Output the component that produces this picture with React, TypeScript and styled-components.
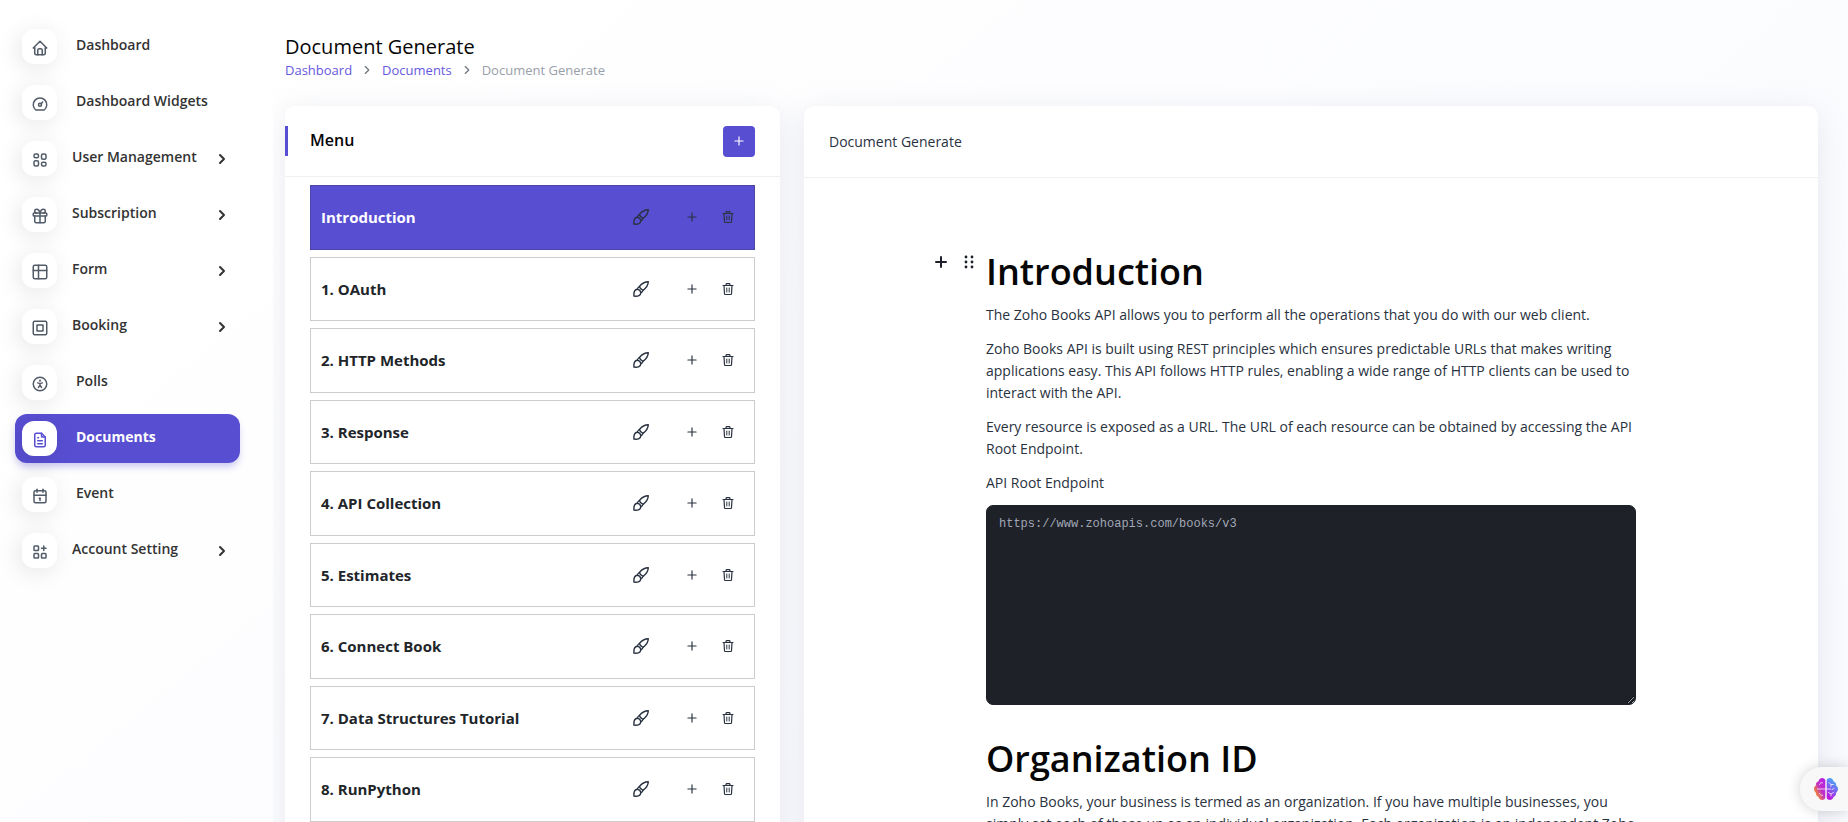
import React from "react";
import styled, { createGlobalStyle, css } from "styled-components";
import {
  TbHome,
  TbDashboard,
  TbLayout2,
  TbGift,
  TbTable,
  TbAccessible,
  TbFileText,
  TbCalendar,
  TbApps,
  TbChevronRight,
  TbPlus,
} from "react-icons/tb";

const primary = "#584ed2";

const GlobalStyle = createGlobalStyle`
  *, *::before, *::after { box-sizing: border-box; }
  body {
    margin: 0;
    font-family: "Open Sans", sans-serif;
    font-size: 14px;
    line-height: 1.5;
    color: #293240;
    background: linear-gradient(141deg, #ffffff 10%, #f9fafe 100%) fixed;
  }
  button { font: inherit; color: inherit; }
  h1, h2, h3, h4, p, ul, ol { margin: 0; padding: 0; }
  ul, ol { list-style: none; }
  a { text-decoration: none; }
`;

const Shell = styled.div`
  display: flex;
  height: 100vh;
  overflow: hidden;
`;

const Sidebar = styled.nav`
  flex: 0 0 273px;
  padding: 22px 33px 22px 15px;
`;

const NavList = styled.ul`
  display: flex;
  flex-direction: column;
  gap: 7px;
`;

const NavLink = styled.a<{ $active?: boolean }>`
  display: flex;
  align-items: center;
  height: 49px;
  padding: 7px 10px 7px 7px;
  border-radius: 12px;
  color: #333333;
  font-weight: 600;
  ${(p) =>
    p.$active &&
    css`
      background: ${primary};
      color: #ffffff;
      font-weight: 700;
      box-shadow: 0 5px 7px -1px rgba(88, 78, 210, 0.3);
    `}
`;

const NavIcon = styled.span<{ $active?: boolean }>`
  display: flex;
  align-items: center;
  justify-content: center;
  width: 35px;
  height: 35px;
  padding-top: 3px;
  border-radius: 12px;
  background: #ffffff;
  color: ${(p) => (p.$active ? primary : "#525b69")};
  font-size: 18px;
  box-shadow: -3px 4px 23px rgba(0, 0, 0, 0.1);
`;

const NavLabel = styled.span<{ $group?: boolean }>`
  flex: 1;
  padding-bottom: 4px;
  margin-left: ${(p) => (p.$group ? "15px" : "19px")};
`;

const Main = styled.main`
  flex: 1;
  min-width: 0;
  padding: 32px 18px 24px 0;
  overflow-y: auto;
  scrollbar-width: none;
`;

const PageHeader = styled.header`
  padding: 0 12px;
  margin-bottom: 27px;
`;

const PageTitle = styled.h1`
  font-size: 20px;
  font-weight: 500;
  line-height: 29px;
  color: #060606;
`;

const Crumbs = styled.ol`
  display: flex;
  align-items: center;
  font-size: 13px;
  line-height: 18px;
  color: #99a0a8;
  a { color: #6759dd; }
  svg { margin: 0 8px; color: #6c757d; display: block; }
`;

const Crumb = styled.li`
  display: flex;
  align-items: center;
`;

const Columns = styled.div`
  display: grid;
  grid-template-columns: minmax(0, 1fr) minmax(0, 2fr);
`;

const Column = styled.section`
  padding: 0 12px;
`;

const Card = styled.div`
  min-height: 100%;
  background: #ffffff;
  border-radius: 10px;
  box-shadow: 0 6px 30px rgba(182, 186, 203, 0.3);
`;

const MenuHeader = styled.header`
  display: flex;
  align-items: center;
  justify-content: space-between;
  height: 71px;
  padding-right: 25px;
  border-bottom: 1px solid #f1f1f1;
`;

const MenuTitle = styled.h2`
  height: 30px;
  padding-left: 22px;
  border-left: 3px solid ${primary};
  font-size: 16px;
  font-weight: 600;
  line-height: 28px;
  color: #060606;
`;

const AddButton = styled.button`
  display: flex;
  align-items: center;
  justify-content: center;
  width: 32px;
  height: 31px;
  padding: 0;
  border: 0;
  border-radius: 4px;
  background: ${primary};
  color: #ffffff;
  cursor: pointer;
`;

const MenuList = styled.ul`
  display: flex;
  flex-direction: column;
  gap: 7px;
  padding: 8px 25px 25px;
`;

const MenuRow = styled.li<{ $active?: boolean }>`
  display: flex;
  align-items: center;
  padding: 20px 20px 20px 10px;
  border: 1px solid ${(p) => (p.$active ? "#4d46a6" : "#cccccc")};
  background: ${(p) => (p.$active ? primary : "#ffffff")};
  font-size: 15px;
  font-weight: 700;
  color: #212529;
  a { flex: 1; color: ${(p) => (p.$active ? "#ffffff" : "inherit")}; }
`;

const RowButton = styled.button<{ $gap?: number }>`
  display: flex;
  padding: 0;
  margin-left: ${(p) => p.$gap ?? 0}px;
  border: 0;
  background: none;
  color: #293240;
  cursor: pointer;
`;

const DocHeader = styled.header`
  height: 72px;
  padding: 25px;
  border-bottom: 1px solid #f1f1f1;
`;

const DocTitle = styled.h2`
  font-size: 14px;
  font-weight: 400;
  line-height: 21px;
`;

const Editor = styled.article`
  position: relative;
  width: 100%;
  max-width: 650px;
  margin: 0 auto;
  padding: 61px 0 40px;
`;

const BlockTools = styled.div`
  position: absolute;
  top: 71px;
  right: 100%;
  display: flex;
  gap: 2px;
  padding-right: 4px;
`;

const ToolButton = styled.button`
  display: flex;
  align-items: center;
  justify-content: center;
  width: 26px;
  height: 26px;
  padding: 0;
  border: 0;
  background: none;
  color: #1d202b;
  cursor: pointer;
`;

const BlockHeading = styled.h3`
  padding: 10px 0 3px;
  font-size: 36px;
  font-weight: 600;
  line-height: 46px;
  color: #060606;
`;

const Paragraph = styled.p`
  padding: 6px 0;
  line-height: 22px;
`;

const CodeBlock = styled.textarea`
  display: block;
  width: 100%;
  height: 200px;
  margin: 5px 0 21px;
  padding: 9px 12px;
  border: 1px solid #1e2128;
  border-radius: 7px;
  outline: 0;
  resize: vertical;
  background: #1e2128;
  color: #a1a7b6;
  font-family: "Liberation Mono", monospace;
  font-size: 12px;
  line-height: 19px;
`;

const AssistantButton = styled.button`
  position: fixed;
  right: 0;
  bottom: 11px;
  display: flex;
  align-items: center;
  width: 48px;
  height: 44px;
  padding: 0 0 0 14px;
  border: 0;
  border-radius: 22px 0 0 22px;
  background: #f8f8f8;
  box-shadow: 0 0 14px rgba(0, 0, 0, 0.18);
  cursor: pointer;
`;

const FrameIcon = () => (
  <svg width="18" height="18" viewBox="0 0 24 24" fill="none" stroke="currentColor" strokeWidth="2" strokeLinejoin="round">
    <rect x="3" y="3" width="18" height="18" rx="2" />
    <rect x="8" y="8" width="8" height="8" />
  </svg>
);

const BrushIcon = () => (
  <svg width="16" height="16" viewBox="0 0 16 16" fill="none" stroke="currentColor" strokeWidth="1.4" strokeLinejoin="round">
    <path d="M15.3 0.8C11.900 0.900 8.800 2.600 6.400 5.500C7 7.500 8 8.700 10 9.400C13.200 7 15.200 4 15.300 0.800Z" />
    <path d="M6.400 5.500C5.200 6.200 4.500 7.100 4.300 8.200C6.200 8.400 7.500 9.700 7.800 11.700C9 11.400 9.700 10.600 10 9.400" />
    <path d="M4.300 8.200C1.600 8.600 0.500 10.800 1 15.100C5.400 15.500 7.700 14.400 7.800 11.700" />
  </svg>
);

const TrashIcon = () => (
  <svg width="12" height="14" viewBox="0 0 12 14" fill="none" stroke="currentColor" strokeWidth="1.2" strokeLinecap="round" strokeLinejoin="round">
    <path d="M1 3.500h10M3.800 3.500L4.300 1.700h3.400L8.200 3.500M2 3.500l0.500 8.200c0 0.500 0.400 0.800 0.900 0.800h5.200c0.500 0 0.900-0.300 0.900-0.800L10 3.500" />
    <path strokeWidth="1" d="M4.800 6v4M7.200 6v4" />
  </svg>
);

const BrainIcon = () => (
  <svg width="24" height="24" viewBox="0 0 24 24" fill="none">
    <defs>
      <linearGradient id="brainLeft" x1="0" y1="1" x2="1" y2="0">
        <stop offset="0.2" stopColor="#f58a2c" />
        <stop offset="0.55" stopColor="#c02fc8" />
        <stop offset="1" stopColor="#b41fe4" />
      </linearGradient>
      <linearGradient id="brainRight" x1="0.3" y1="1" x2="0.7" y2="0">
        <stop offset="0.1" stopColor="#b81ddf" />
        <stop offset="0.5" stopColor="#7b62f0" />
        <stop offset="0.9" stopColor="#4aa8f5" />
      </linearGradient>
    </defs>
    <path fill="url(#brainLeft)" d="M11.3 3C10.8 1.700 9.600 1 8.200 1 6.200 1 4.800 2.400 4.500 4.200 2.700 4.800 1.600 6.500 1.900 8.400.6 9.200 0 10.500 0 12c0 1.500.7 2.900 1.900 3.700-.2 1.900.8 3.500 2.500 4.100C4.800 21.700 6.200 23 8.200 23c1.400 0 2.600-.7 3.100-2z" />
    <path fill="url(#brainRight)" d="M12.700 3c.5-1.300 1.700-2 3.100-2 2 0 3.400 1.400 3.700 3.200 1.800.6 2.900 2.300 2.600 4.200 1.300.8 1.900 2.100 1.900 3.600 0 1.500-.7 2.900-1.900 3.700.2 1.900-.8 3.500-2.500 4.100-.4 1.900-1.800 3.200-3.800 3.200-1.400 0-2.600-.7-3.100-2z" />
    <g stroke="#ffffff" strokeOpacity="0.75" strokeWidth="1" strokeLinecap="round">
      <path d="M3.500 12h8M5.500 7.500c.3-1.300 1.500-2 3-1.800M5.500 16.500c.3 1.300 1.500 2 3 1.800M12.700 12h4M15 5.500l2 2v2M17 7.500h2.500M14.500 15.500l2.500 1.500 2.500-1.500M17 17v2M18 12.500l2-1" />
    </g>
  </svg>
);

const DragIcon = () => (
  <svg width="10" height="14" viewBox="0 0 10 14" fill="currentColor">
    {[2, 7, 12].map((y) => (
      <React.Fragment key={y}>
        <circle cx="2" cy={y} r="1.4" />
        <circle cx="8" cy={y} r="1.4" />
      </React.Fragment>
    ))}
  </svg>
);

const navItems: { label: string; icon: React.ReactNode; group?: boolean; active?: boolean }[] = [
  { label: "Dashboard", icon: <TbHome /> },
  { label: "Dashboard Widgets", icon: <TbDashboard /> },
  { label: "User Management", icon: <TbLayout2 />, group: true },
  { label: "Subscription", icon: <TbGift />, group: true },
  { label: "Form", icon: <TbTable />, group: true },
  { label: "Booking", icon: <FrameIcon />, group: true },
  { label: "Polls", icon: <TbAccessible /> },
  { label: "Documents", icon: <TbFileText />, active: true },
  { label: "Event", icon: <TbCalendar /> },
  { label: "Account Setting", icon: <TbApps />, group: true },
];

const menuItems = [
  "Introduction",
  "1. OAuth",
  "2. HTTP Methods",
  "3. Response",
  "4. API Collection",
  "5. Estimates",
  "6. Connect Book",
  "7. Data Structures Tutorial",
  "8. RunPython",
];

export default function App() {
  return (
    <>
      <GlobalStyle />
      <Shell>
        <Sidebar>
          <NavList>
            {navItems.map((item) => (
              <li key={item.label}>
                <NavLink href="#" $active={item.active}>
                  <NavIcon $active={item.active}>{item.icon}</NavIcon>
                  <NavLabel $group={item.group}>{item.label}</NavLabel>
                  {item.group && <TbChevronRight size={16} strokeWidth={3} />}
                </NavLink>
              </li>
            ))}
          </NavList>
        </Sidebar>

        <Main>
          <PageHeader>
            <PageTitle>Document Generate</PageTitle>
            <Crumbs>
              <Crumb><a href="#">Dashboard</a></Crumb>
              <Crumb><TbChevronRight size={14} /><a href="#">Documents</a></Crumb>
              <Crumb><TbChevronRight size={14} />Document Generate</Crumb>
            </Crumbs>
          </PageHeader>

          <Columns>
            <Column>
              <Card>
                <MenuHeader>
                  <MenuTitle>Menu</MenuTitle>
                  <AddButton aria-label="Add menu"><TbPlus size={14} /></AddButton>
                </MenuHeader>
                <MenuList>
                  {menuItems.map((label, i) => (
                    <MenuRow key={label} $active={i === 0}>
                      <a href="#">{label}</a>
                      <RowButton aria-label="Design"><BrushIcon /></RowButton>
                      <RowButton $gap={36} aria-label="Add submenu"><TbPlus size={14} /></RowButton>
                      <RowButton $gap={23} aria-label="Delete"><TrashIcon /></RowButton>
                    </MenuRow>
                  ))}
                </MenuList>
              </Card>
            </Column>

            <Column>
              <Card>
                <DocHeader>
                  <DocTitle>Document Generate</DocTitle>
                </DocHeader>
                <Editor>
                  <BlockTools>
                    <ToolButton aria-label="Add block">
                      <svg width="12" height="12" viewBox="0 0 12 12" stroke="currentColor" strokeWidth="2" strokeLinecap="round">
                        <path d="M6 1v10M1 6h10" />
                      </svg>
                    </ToolButton>
                    <ToolButton aria-label="Move block"><DragIcon /></ToolButton>
                  </BlockTools>
                  <BlockHeading>Introduction</BlockHeading>
                  <Paragraph>
                    The Zoho Books API allows you to perform all the operations that you do with our web client.
                  </Paragraph>
                  <Paragraph>
                    Zoho Books API is built using REST principles which ensures predictable URLs that makes writing
                    applications easy. This API follows HTTP rules, enabling a wide range of HTTP clients can be used to
                    interact with the API.
                  </Paragraph>
                  <Paragraph>
                    Every resource is exposed as a URL. The URL of each resource can be obtained by accessing the API
                    Root Endpoint.
                  </Paragraph>
                  <Paragraph>API Root Endpoint</Paragraph>
                  <CodeBlock aria-label="Code" spellCheck={false} defaultValue="https://www.zohoapis.com/books/v3" />
                  <BlockHeading>Organization ID</BlockHeading>
                  <Paragraph>
                    In Zoho Books, your business is termed as an organization. If you have multiple businesses, you
                    simply set each of those up as an individual organization. Each organization is an independent Zoho
                  </Paragraph>
                </Editor>
              </Card>
            </Column>
          </Columns>
        </Main>
      </Shell>
      <AssistantButton aria-label="Assistant"><BrainIcon /></AssistantButton>
    </>
  );
}
